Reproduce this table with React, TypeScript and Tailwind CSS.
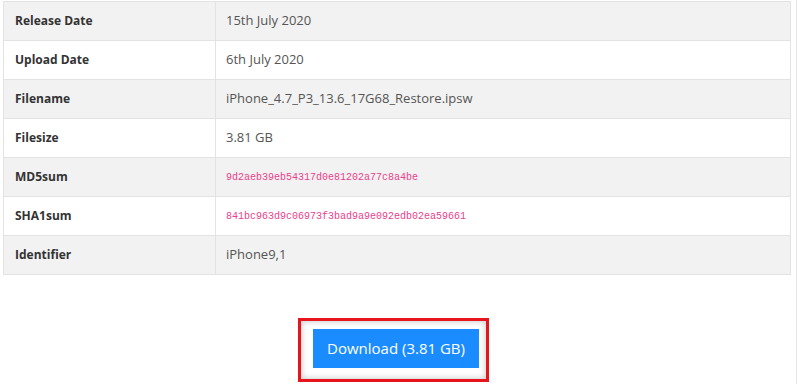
const rows = [
  { label: "Release Date", value: "15th July 2020" },
  { label: "Upload Date", value: "6th July 2020" },
  { label: "Filename", value: "iPhone_4.7_P3_13.6_17G68_Restore.ipsw" },
  { label: "Filesize", value: "3.81 GB" },
  { label: "MD5sum", value: "9d2aeb39eb54317d0e81202a77c8a4be", code: true },
  { label: "SHA1sum", value: "841bc963d9c06973f3bad9a9e092edb02ea59661", code: true },
  { label: "Identifier", value: "iPhone9,1" },
];

export default function App() {
  return (
    <div className="w-[800px] h-[384px] overflow-hidden bg-white font-['Open_Sans',sans-serif]">
      <div className="w-[797px] h-full border-r border-[#e6e6e6] pl-[3px] pt-px">
        <div className="w-[788px]">
          {/* Firmware details */}
          <div className="border border-[#e3e3e3] border-b-0">
            {rows.map((row, i) => (
              <div
                key={row.label}
                className={`flex h-[39px] border-b border-[#e3e3e3] ${
                  i % 2 === 0 ? "bg-[#f2f2f2]" : "bg-white"
                }`}
              >
                <div className="w-[212px] shrink-0 flex items-center pl-[11px] border-r border-[#e3e3e3] text-[12px] font-bold text-[#333]">
                  {row.label}
                </div>
                <div className="flex-1 flex items-center pl-[10px]">
                  {row.code ? (
                    <span className="font-['Liberation_Mono',monospace] text-[10px] text-[#e83e8c]">
                      {row.value}
                    </span>
                  ) : (
                    <span className="text-[13px] text-[#555]">{row.value}</span>
                  )}
                </div>
              </div>
            ))}
          </div>

          {/* Download */}
          <div className="flex justify-center pt-[43px] pr-[7px]">
            <div className="border-[3px] border-[#e8141b] pt-[8px] pl-[12px] pr-[7px] pb-[11px] shadow-[inset_0_0_6px_rgba(0,0,0,0.25)]">
              <button className="w-[166px] h-[39px] bg-[#1a8cff] text-white text-[15px] font-['Open_Sans',sans-serif]">
                Download (3.81 GB)
              </button>
            </div>
          </div>
        </div>
      </div>
    </div>
  );
}
